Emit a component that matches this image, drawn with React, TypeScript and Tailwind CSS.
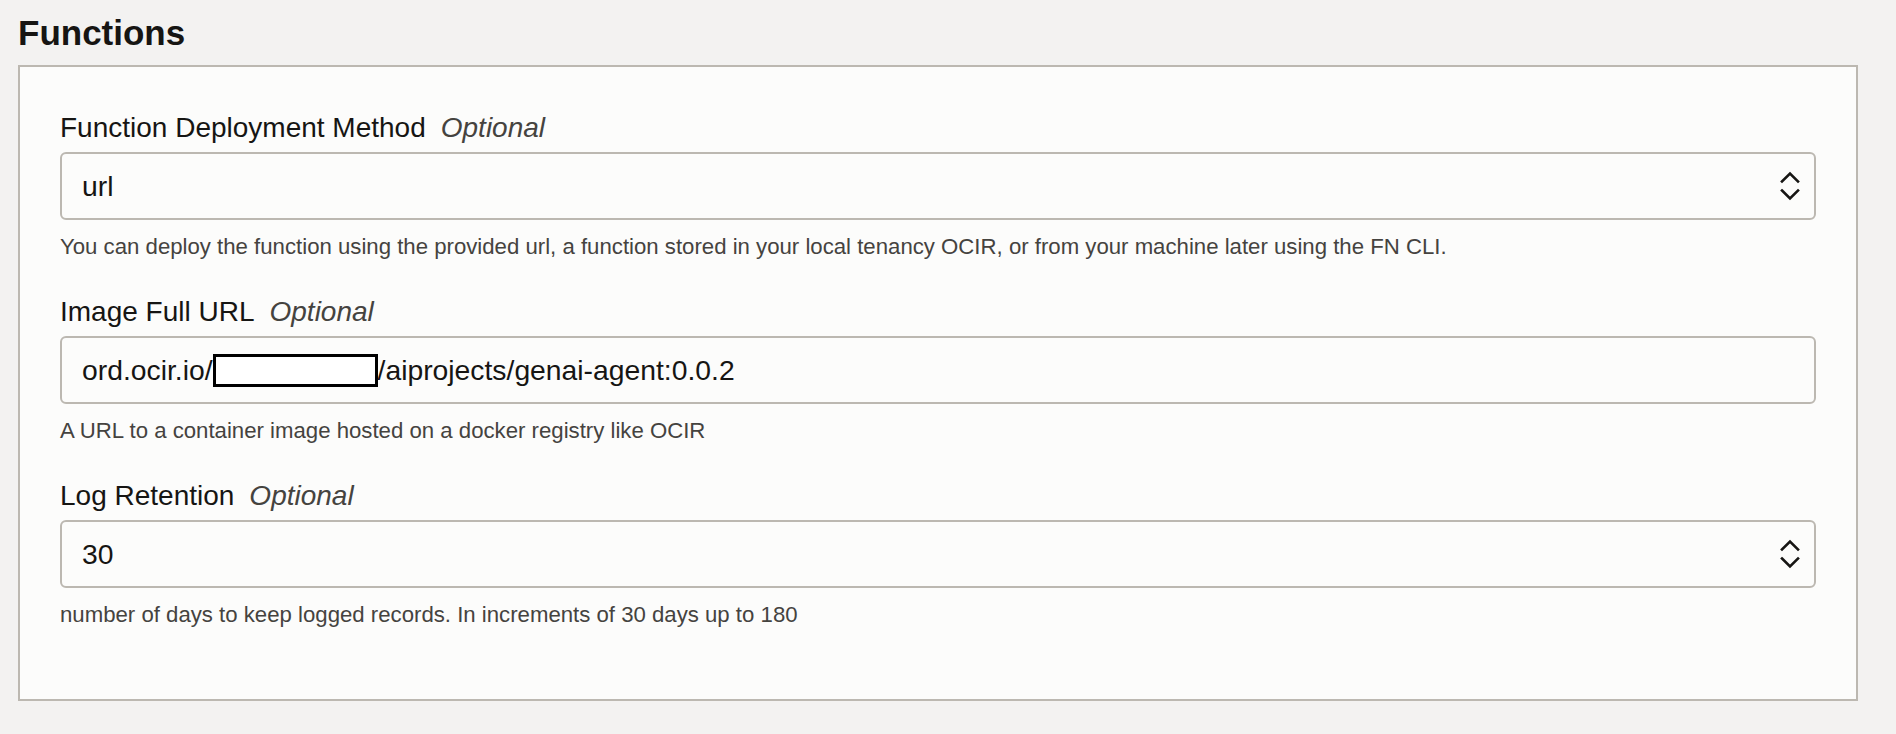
import React from "react";

function Chevrons() {
  return (
    <svg width="20" height="30" viewBox="0 0 20 30" fill="none" className="shrink-0">
      <path d="M2 10.5 L10 2.5 L18 10.5" stroke="#161513" strokeWidth="2.6" strokeLinecap="square" />
      <path d="M2 19.5 L10 27.5 L18 19.5" stroke="#161513" strokeWidth="2.6" strokeLinecap="square" />
    </svg>
  );
}

function Field({
  label,
  help,
  children,
  select,
}: {
  label: string;
  help: string;
  children: React.ReactNode;
  select?: boolean;
}) {
  return (
    <div>
      <div className="flex items-baseline h-[34px] leading-[34px] text-[28px] text-[#161513]">
        <span>{label}</span>
        <span className="ml-[15px] italic text-[#45433f]">Optional</span>
      </div>
      <div className="mt-[7px] h-[68px] rounded-[6px] border-2 border-[#bcb8b1] bg-[#fcfcfb] flex items-center pl-[20px] pr-[14px] text-[28.3px] text-[#161513]">
        <div className="flex-1 flex items-center">{children}</div>
        {select ? <Chevrons /> : null}
      </div>
      <p className="mt-[13px] text-[22.2px] leading-[28px] text-[#45433f]">{help}</p>
    </div>
  );
}

export default function App() {
  return (
    <div
      className="min-h-[734px] bg-[#f3f2f1] pl-[18px] pr-[38px] pt-[13px]"
      style={{ fontFamily: '"Liberation Sans", Arial, sans-serif' }}
    >
      <h2 className="text-[35px] font-bold leading-[40px] text-[#161513] mb-[12px]">Functions</h2>
      <div className="border-2 border-[#bcb8b1] bg-[#fcfcfb] px-[40px] pt-[44px] pb-[70px] flex flex-col gap-[34px]">
        <Field
          label="Function Deployment Method"
          help="You can deploy the function using the provided url, a function stored in your local tenancy OCIR, or from your machine later using the FN CLI."
          select
        >
          <span>url</span>
        </Field>
        <Field label="Image Full URL" help="A URL to a container image hosted on a docker registry like OCIR">
          <span>ord.ocir.io/</span>
          <span className="inline-block w-[165px] h-[33px] border-[3px] border-black bg-white"></span>
          <span>/aiprojects/genai-agent:0.0.2</span>
        </Field>
        <Field
          label="Log Retention"
          help="number of days to keep logged records. In increments of 30 days up to 180"
          select
        >
          <span>30</span>
        </Field>
      </div>
    </div>
  );
}
